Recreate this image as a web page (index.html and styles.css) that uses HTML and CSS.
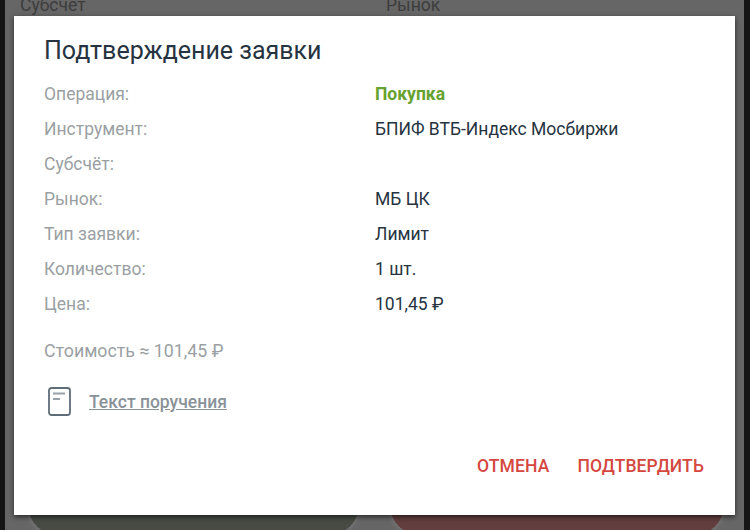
FILE: index.html
```html
<!DOCTYPE html>
<html lang="en">

<head>
    <meta charset="UTF-8">
    <meta name="viewport" content="width=device-width, initial-scale=1.0">
    <title>Подтверждение заявки</title>
    <link rel="stylesheet" href="styles.css">
</head>

<body>
    <div class="screen">
        <!-- Page behind the dialog -->
        <div class="page">
            <div class="page-row">
                <div class="page-label">Субсчет</div>
                <div class="page-label">Рынок</div>
            </div>
            <div class="page-buttons">
                <div class="page-button buy"></div>
                <div class="page-button sell"></div>
            </div>
        </div>

        <div class="dialog">
            <h1>Подтверждение заявки</h1>
            <div class="details">
                <div class="label">Операция:</div>
                <div class="value buy-text">Покупка</div>
                <div class="label">Инструмент:</div>
                <div class="value">БПИФ ВТБ-Индекс Мосбиржи</div>
                <div class="label">Субсчёт:</div>
                <div class="value"></div>
                <div class="label">Рынок:</div>
                <div class="value">МБ ЦК</div>
                <div class="label">Тип заявки:</div>
                <div class="value">Лимит</div>
                <div class="label">Количество:</div>
                <div class="value">1 шт.</div>
                <div class="label">Цена:</div>
                <div class="value">101,45 ₽</div>
            </div>
            <div class="cost">Стоимость ≈ 101,45 ₽</div>
            <div class="order-text">
                <svg class="doc-icon" viewBox="0 0 23 29">
                    <rect x="1" y="1" width="21" height="27" rx="2.5" />
                    <path d="M5 6.5 H17 M5 12 H12" />
                </svg>
                <a href="#">Текст поручения</a>
            </div>
            <div class="actions">
                <button>Отмена</button>
                <button>Подтвердить</button>
            </div>
        </div>
    </div>
</body>

</html>
```

FILE: styles.css
```css
html,
body {
    margin: 0;
    height: 100%;
}

body {
    font-family: Roboto, "Liberation Sans", sans-serif;
    background-color: #151515;
}

.screen {
    position: relative;
    width: 750px;
    height: 530px;
    overflow: hidden;
}

.page {
    display: flex;
    flex-direction: column;
    justify-content: space-between;
    width: 739px;
    height: 530px;
    margin-left: 5px;
    overflow: hidden;
    background-color: #666;
}

.page-row {
    display: flex;
    margin-top: -5px;
    padding-left: 15px;
}

.page-label {
    flex: none;
    width: 366px;
    font-size: 17.5px;
    line-height: 20px;
    color: #3d3d3d;
}

.page-buttons {
    display: flex;
    gap: 31px;
    margin-bottom: -5px;
    padding-left: 23px;
}

.page-button {
    flex: none;
    height: 60px;
    border-radius: 0 0 30px 30px;
    box-shadow: 0 0 6px rgba(255, 255, 255, 0.18);
}

.buy {
    width: 331px;
    background-color: #474b44;
}

.sell {
    width: 334px;
    background-color: #633e3e;
}

.dialog {
    position: absolute;
    left: 14px;
    top: 16px;
    box-sizing: border-box;
    width: 721px;
    height: 499px;
    padding: 20px 30px 0;
    background-color: #fff;
    box-shadow: 0 2px 5px rgba(0, 0, 0, 0.6);
}

h1 {
    margin: 0;
    font-size: 25px;
    font-weight: 400;
    line-height: 30px;
    color: #263340;
}

.details {
    display: grid;
    grid-template-columns: 331px 1fr;
    grid-auto-rows: 35px;
    margin-top: 11px;
    font-size: 17.5px;
    line-height: 35px;
}

.label {
    color: #9a9fa3;
}

.value {
    color: #263340;
}

.buy-text {
    font-weight: 700;
    color: #66a22e;
}

.cost {
    margin-top: 11px;
    font-size: 17.8px;
    line-height: 35px;
    color: #9a9fa3;
}

.order-text {
    display: flex;
    align-items: center;
    gap: 18px;
    margin-top: 19px;
    padding-left: 4px;
}

.doc-icon {
    width: 23px;
    height: 29px;
    fill: none;
    stroke: #5f6d79;
    stroke-width: 1.8;
}

.doc-icon path {
    stroke: #9aa2a9;
}

.order-text a {
    font-size: 17.5px;
    font-weight: 500;
    color: #8a9299;
}

.actions {
    display: flex;
    justify-content: flex-end;
    gap: 28px;
    margin-top: 40px;
    padding-right: 1px;
}

button {
    padding: 0;
    border: none;
    background: none;
    font-family: inherit;
    font-size: 17.5px;
    font-weight: 500;
    line-height: 20px;
    letter-spacing: 0.1px;
    text-transform: uppercase;
    color: #d5473f;
    cursor: pointer;
}
```
